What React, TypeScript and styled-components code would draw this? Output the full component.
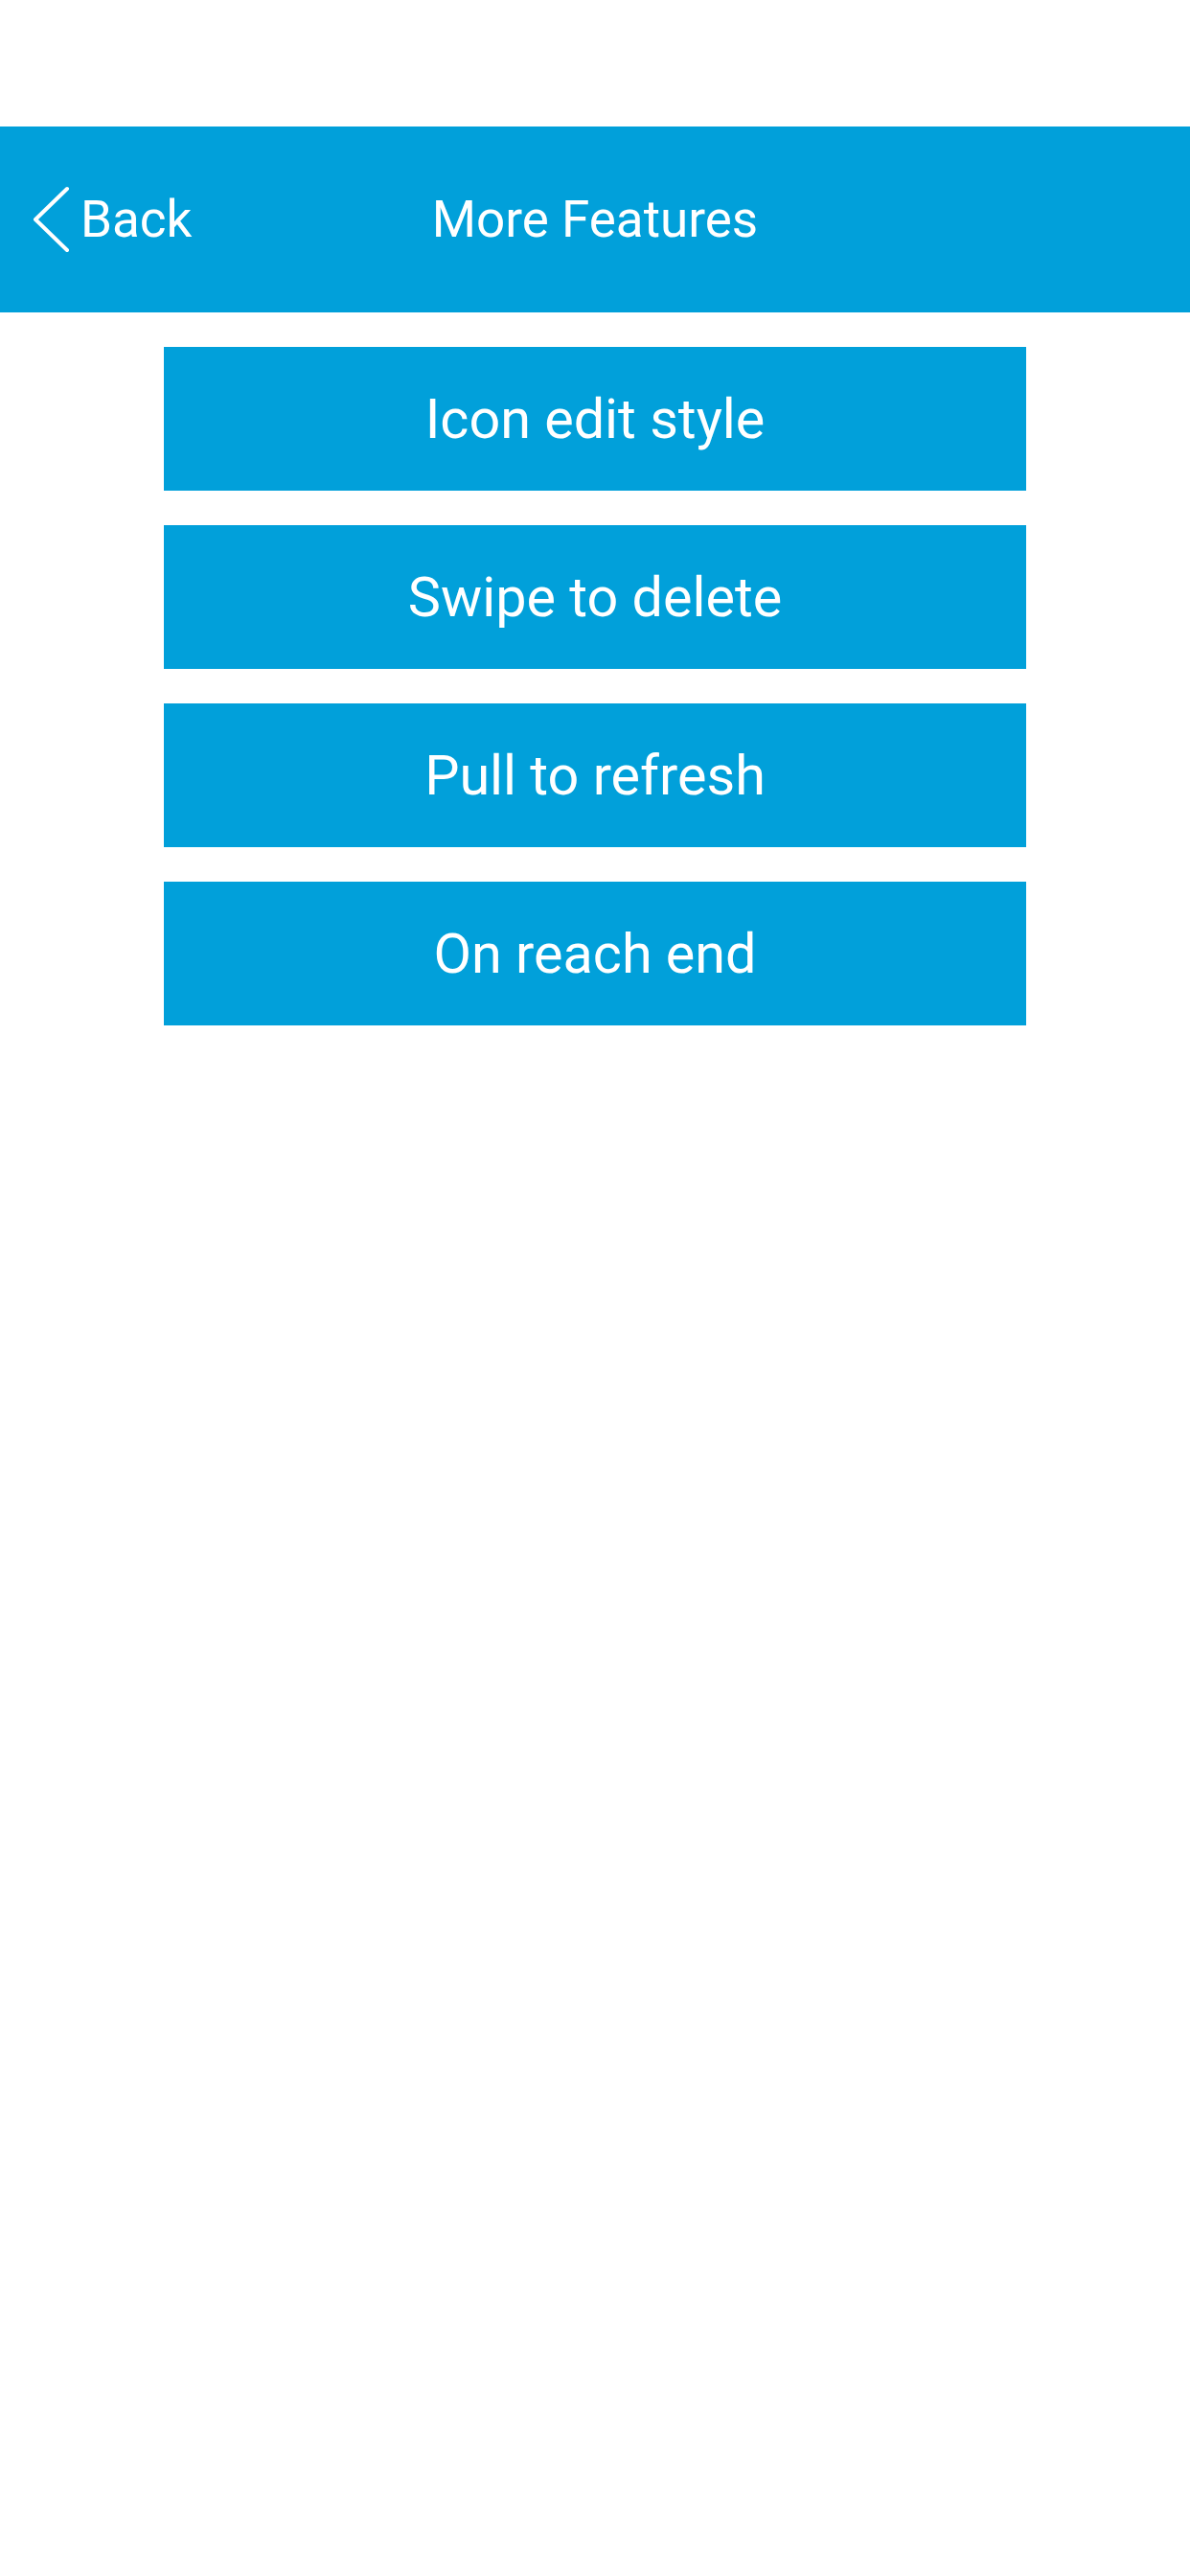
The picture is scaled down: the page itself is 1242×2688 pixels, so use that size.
import React from "react";
import styled, { createGlobalStyle } from "styled-components";

const GlobalStyle = createGlobalStyle`
  html, body { margin: 0; padding: 0; background: #ffffff; }
  body { font-family: Roboto, "Noto Sans", sans-serif; }
`;

const Screen = styled.div`
  width: 1242px;
  min-height: 2688px;
  background: #ffffff;
  display: flex;
  flex-direction: column;
`;

const StatusBar = styled.div`
  height: 132px;
  background: #ffffff;
`;

const NavBar = styled.header`
  height: 194px;
  background: #01a0da;
  display: grid;
  grid-template-columns: 1fr auto 1fr;
  align-items: center;
  color: #ffffff;
`;

const BackButton = styled.button`
  justify-self: start;
  display: flex;
  align-items: center;
  gap: 11px;
  margin-left: 33px;
  padding: 0;
  border: none;
  background: none;
  color: #ffffff;
  font-family: Roboto, sans-serif;
  font-size: 53px;
  cursor: pointer;
`;

const Title = styled.h1`
  margin: 0;
  font-family: Roboto, sans-serif;
  font-weight: 400;
  font-size: 53px;
  color: #ffffff;
`;

const List = styled.div`
  display: flex;
  flex-direction: column;
  align-items: center;
  gap: 36px;
  padding-top: 36px;
`;

const FeatureButton = styled.button`
  width: 900px;
  height: 150px;
  border: none;
  background: #01a0da;
  color: #ffffff;
  font-family: Roboto, sans-serif;
  font-size: 57.5px;
  display: flex;
  align-items: center;
  justify-content: center;
  padding: 0;
  cursor: pointer;
`;

const Chevron = () => (
  <svg width="40" height="70" viewBox="0 0 40 70" fill="none">
    <path
      d="M37 3 L4 35 L37 67"
      stroke="#ffffff"
      strokeWidth="4"
      strokeLinecap="round"
      strokeLinejoin="round"
    />
  </svg>
);

const features = ["Icon edit style", "Swipe to delete", "Pull to refresh", "On reach end"];

export default function App() {
  return (
    <>
      <GlobalStyle />
      <Screen>
        <StatusBar />
        <NavBar>
          <BackButton>
            <Chevron />
            <span>Back</span>
          </BackButton>
          <Title>More Features</Title>
          <span />
        </NavBar>
        <List>
          {features.map((f) => (
            <FeatureButton key={f}>{f}</FeatureButton>
          ))}
        </List>
      </Screen>
    </>
  );
}
